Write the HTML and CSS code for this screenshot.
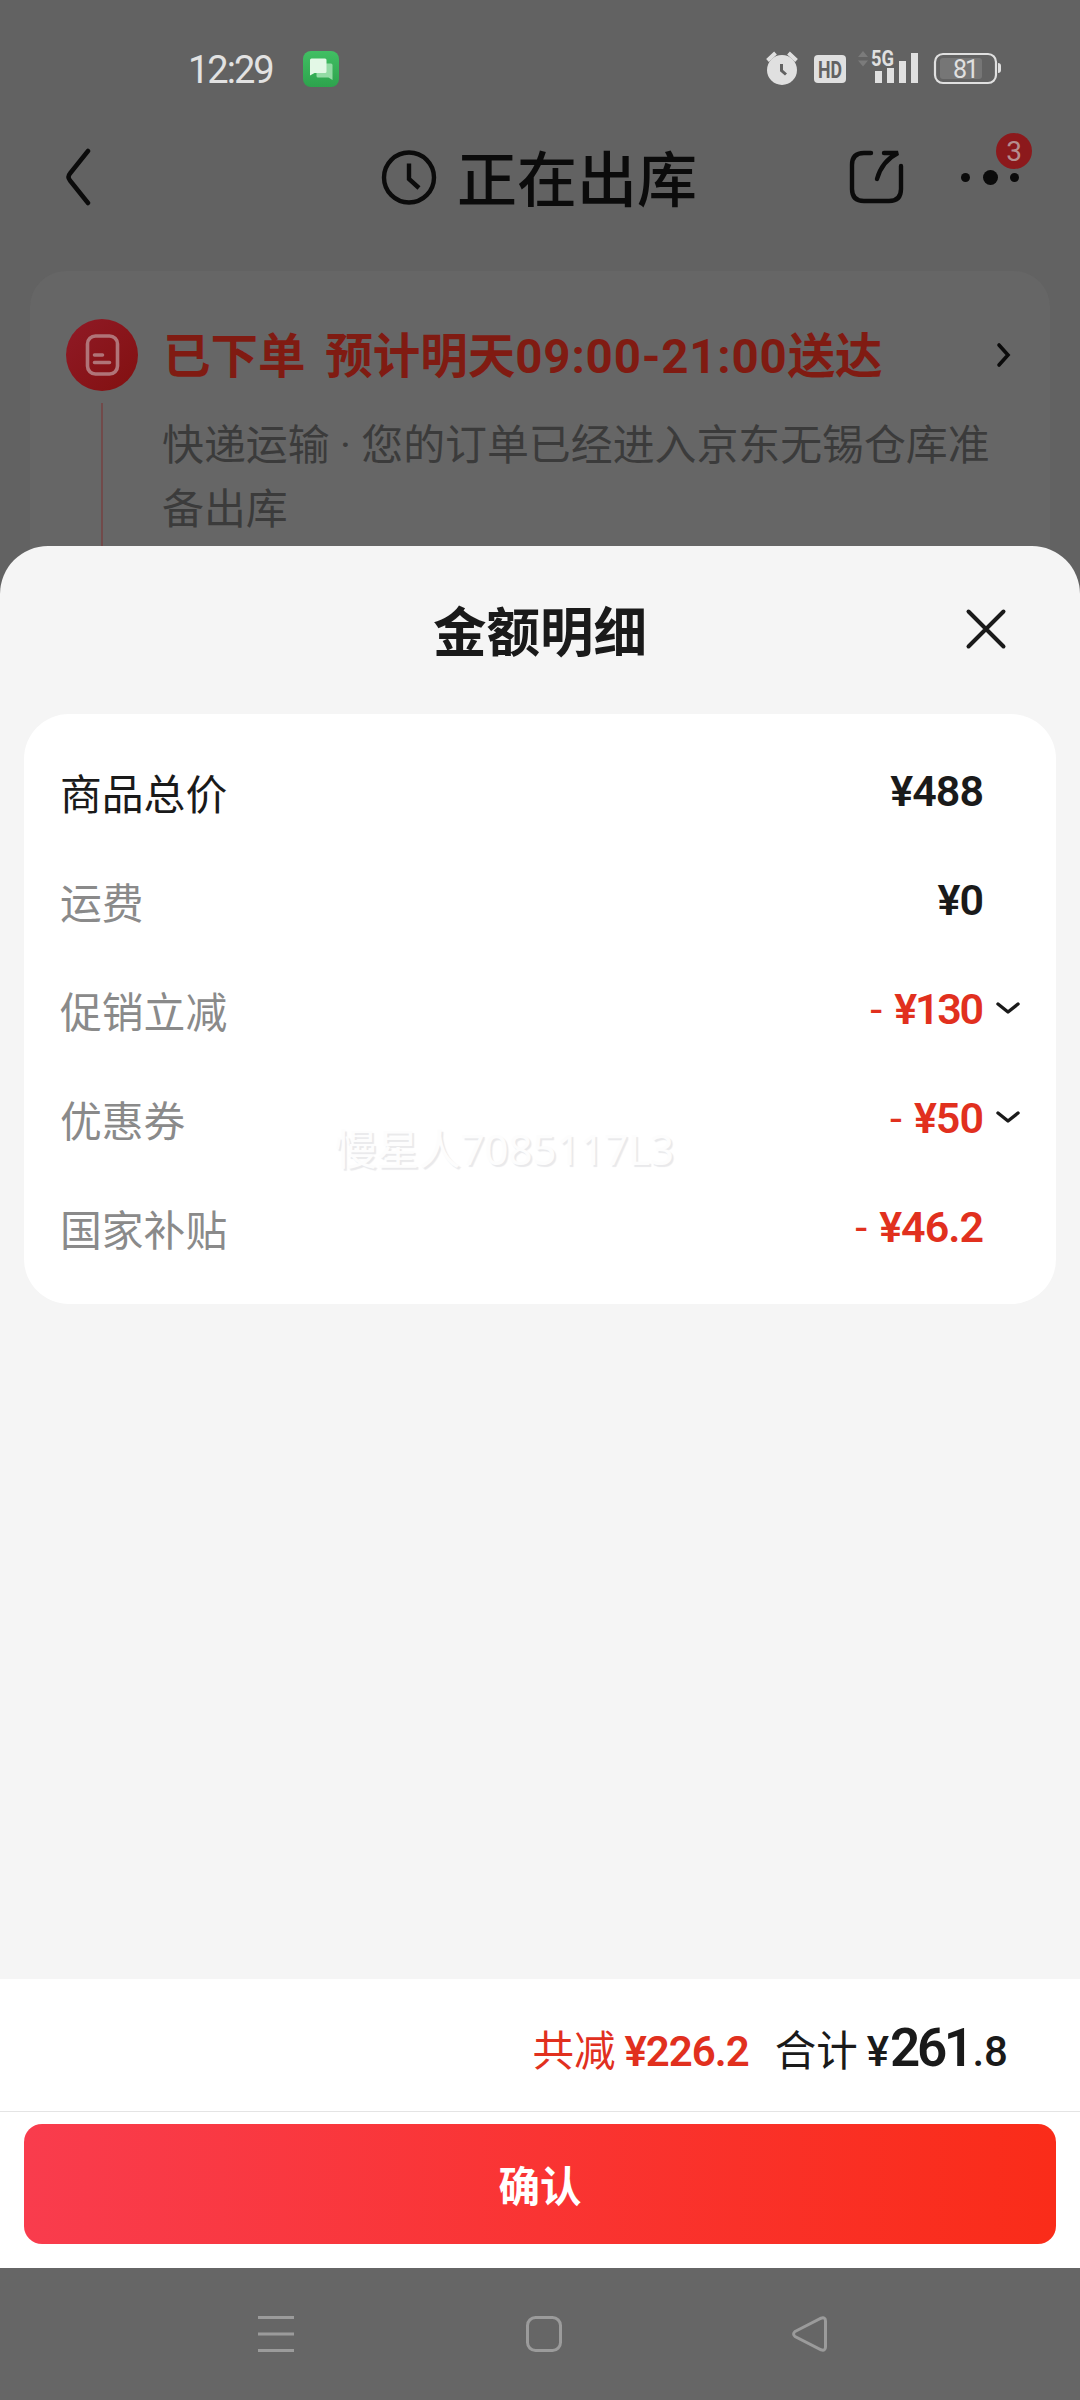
FILE: index.html
```html
<!DOCTYPE html>
<html lang="zh-CN">
<head>
<meta charset="utf-8">
<title>金额明细</title>
<link rel="stylesheet" href="styles.css">
</head>
<body>
<div class="behind">
  <div class="status">
    <span class="time">12:29</span>
    <svg class="app-icon" width="36" height="36" viewBox="0 0 36 36">
      <defs><linearGradient id="g" x1="0" y1="0" x2="0" y2="1"><stop offset="0" stop-color="#41bf63"/><stop offset="1" stop-color="#2da34d"/></linearGradient></defs>
      <rect width="36" height="36" rx="8" fill="url(#g)"/>
      <path d="M15 12.500h13q1.500 0 1.500 1.500v15l-4-2.500h-10.500q-1.500 0-1.500-1.500v-11q0-1.500 1.500-1.500z" fill="#93dba5"/>
      <path d="M8.500 7.500h13.500q1.500 0 1.500 1.500v11.500q0 1.500-1.500 1.500h-10.500l-4.500 2.500v-15.500q0-1.500 1.500-1.500z" fill="#e3f8e6"/>
    </svg>
    <svg class="indicators" width="240" height="58" viewBox="764 40 240 58">
      <circle cx="782" cy="70" r="15" fill="#e0e0e0"/>
      <path d="M767.500 60.500l8-7.500M796.500 60.500l-8-7.500" stroke="#e0e0e0" stroke-width="4"/>
      <path d="M781.500 64v6.500l4.500 4" stroke="#626262" stroke-width="3" fill="none"/>
      <rect x="814" y="55" width="32" height="28" rx="4" fill="#e0e0e0"/>
      <text x="818" y="77.500" class="hd" textLength="24" lengthAdjust="spacingAndGlyphs">HD</text>
      <path d="M858 57l5-6 5 6zM858 60.500l5 6 5-6z" fill="#7b7b7b"/>
      <text x="871" y="66" class="net" textLength="23" lengthAdjust="spacingAndGlyphs">5G</text>
      <path d="M875 71h7v12h-7zM887 68h7v15h-7zM899 61h7v22h-7zM911 53h7v30h-7z" fill="#e0e0e0"/>
      <rect x="940" y="58" width="42" height="21" rx="3" fill="#767676"/>
      <rect x="935" y="54" width="61" height="29" rx="8" fill="none" stroke="#e0e0e0" stroke-width="2.200"/>
      <path d="M998 63q3 0 3 3v4q0 3-3 3z" fill="#e0e0e0"/>
      <text x="953" y="77.500" class="pct" textLength="26">81</text>
    </svg>
  </div>
  <header class="head">
    <svg class="back" width="28" height="62" viewBox="65 145 28 62"><path d="M88 150L70 172.500Q67 176 70 179.500L88 202" fill="none" stroke="#0b0b0b" stroke-width="4.500" stroke-linecap="round"/></svg>
    <div class="head-title">
      <svg width="56" height="56" viewBox="0 0 56 56" fill="none" stroke="#0b0b0b" stroke-width="4.400"><circle cx="28" cy="28.500" r="25"/><path d="M28 14.500v15.500l10 9"/></svg>
      <h1>正在出库</h1>
    </div>
    <svg class="share" width="56" height="56" viewBox="849 149 56 56" fill="none" stroke="#0b0b0b" stroke-width="4.400" stroke-linecap="round"><path d="M871 153h-7q-12 0-12 12v24q0 12 12 12h25q12 0 12-12v-23"/><path d="M884 153h14q-16 8-21 26"/></svg>
    <div class="more"><i class="dot"></i><i class="dot big"></i><i class="dot"></i><span class="badge">3</span></div>
  </header>
  <section class="order">
    <div class="rail">
      <svg width="72" height="72" viewBox="0 0 72 72"><defs><linearGradient id="r" x1="0" y1="0" x2="1" y2="1"><stop offset="0" stop-color="#901a26"/><stop offset="1" stop-color="#821010"/></linearGradient></defs><circle cx="36" cy="36" r="36" fill="url(#r)"/><g fill="none" stroke="#b07478" stroke-width="3.600" stroke-linecap="round"><rect x="21.500" y="17" width="30" height="38" rx="8"/><path d="M28.500 36h8M28.500 43.500h15"/></g></svg>
      <i class="line"></i>
    </div>
    <div class="order-body">
      <div class="order-head"><h2>已下单 预计明天<span class="slot">09:00-21:00</span>送达</h2>
        <svg width="16" height="26" viewBox="0 0 16 26"><path d="M3 3l9 10-9 10" fill="none" stroke="#0b0b0b" stroke-width="3.600" stroke-linecap="round"/></svg></div>
      <p>快递运输 · 您的订单已经进入京东无锡仓库准备出库</p>
    </div>
  </section>
</div>
<main class="sheet">
  <div class="sheet-head">
    <h2>金额明细</h2>
    <svg class="close" width="44" height="44" viewBox="0 0 44 44"><path d="M4.500 4.500l35 35M39.500 4.500l-35 35" stroke="#1a1a1a" stroke-width="4" stroke-linecap="round"/></svg>
  </div>
  <div class="panel">
    <div class="row first"><span class="label">商品总价</span><span class="amount">¥488</span></div>
    <div class="row"><span class="label">运费</span><span class="amount">¥0</span></div>
    <div class="row cut"><span class="label">促销立减</span><span class="minus">-</span><span class="amount tight">¥130</span><svg class="chev" width="26" height="16" viewBox="0 0 26 16"><path d="M3 3l10 8 10-8"/></svg></div>
    <div class="row cut"><span class="label">优惠券</span><span class="minus">-</span><span class="amount">¥50</span><svg class="chev" width="26" height="16" viewBox="0 0 26 16"><path d="M3 3l10 8 10-8"/></svg></div>
    <div class="row cut"><span class="label">国家补贴</span><span class="minus">-</span><span class="amount">¥46.2</span></div>
    <span class="mark">慢星人7085117L3</span>
  </div>
  <div class="total">
    <span class="t-label red">共减</span><span class="t-num red">¥226.2</span>
    <span class="t-label second">合计</span><span class="t-sum">¥<b>261</b>.8</span>
  </div>
  <div class="action"><button class="confirm">确认</button></div>
</main>
<nav class="nav">
  <svg width="36" height="36" viewBox="0 0 36 36"><path d="M0 1.500h36M0 18h36M0 34.500h36"/></svg>
  <svg width="36" height="36" viewBox="0 0 36 36"><rect x="1.500" y="1.500" width="33" height="33" rx="8"/></svg>
  <svg width="36" height="36" viewBox="0 0 36 36"><path d="M3 15.500L29 2.200Q33.500 .8 33.500 5v26Q33.500 35.200 29 33.800L3 20.500Q.2 18 3 15.500z"/></svg>
</nav>
</body>
</html>
```
FILE: styles.css
```css
* { box-sizing: border-box; }
body {
  margin: 0; width: 1080px; height: 2400px; overflow: hidden;
  display: flex; flex-direction: column; background: #626262; color: #1a1a1a;
  font-family: Roboto, "Noto Sans CJK SC", sans-serif;
}
h1, h2, p { margin: 0; }
svg { display: block; flex: none; }

.behind { height: 546px; flex: none; }
.status { height: 137px; padding: 0 76px 0 188px; display: flex; align-items: center; }
.time { width: 115px; font-size: 38px; letter-spacing: -2px; color: #e2e2e2; line-height: 44px; padding-top: 2px; white-space: nowrap; }
.indicators { margin-left: auto; }
.hd { font: 700 24px Roboto, sans-serif; fill: #626262; }
.net { font: 700 22px Roboto, sans-serif; fill: #e0e0e0; }
.pct { font: 400 25px Roboto, sans-serif; fill: #e0e0e0; }

.head { height: 80px; padding: 0 61px 0 65px; display: flex; align-items: center; }
.head-title { margin-left: 288px; display: flex; align-items: center; gap: 20px; }
.head-title h1 { font-size: 60px; line-height: 72px; font-weight: 500; color: #0b0b0b; width: 240px; padding-top: 9px; white-space: nowrap; }
.share { margin-left: 152px; }
.more { position: relative; margin-left: 56px; width: 58px; display: flex; align-items: center; justify-content: space-between; }
.dot { width: 9px; height: 9px; border-radius: 50%; background: #0b0b0b; }
.dot.big { width: 15px; height: 15px; }
.badge { position: absolute; left: 35px; top: -37px; width: 36px; height: 36px; border-radius: 50%; background: #8c191c; color: #b58e8f; font-size: 28px; line-height: 37px; text-align: center; }

.order { height: 360px; margin: 54px 30px 0; border-radius: 36px; background: #666; padding: 48px 46px 0 36px; display: flex; gap: 25px; }
.rail { width: 72px; display: flex; flex-direction: column; align-items: center; gap: 12px; }
.line { width: 2px; flex: 1; background: #714a4a; }
.order-body { flex: 1; }
.order-head { height: 72px; display: flex; align-items: center; justify-content: space-between; }
.order-head h2 { font-size: 47.500px; line-height: 67px; padding-top: 5px; word-spacing: 8px; font-weight: 700; color: #801b12; white-space: nowrap; }
.slot { letter-spacing: .8px; }
.order-body p { width: 850px; margin: 23px 0 0 -1px; font-size: 41.900px; line-height: 64px; color: #3b3b3b; }

.sheet { position: relative; height: 1722px; flex: none; border-radius: 48px 48px 0 0; background: #f5f5f5; display: flex; flex-direction: column; }
.sheet-head { position: relative; height: 168px; padding-top: 8px; display: flex; justify-content: center; align-items: center; }
.sheet-head h2 { font-size: 53.500px; line-height: 64px; font-weight: 700; }
.close { position: absolute; right: 72px; top: 61px; }

.panel { position: relative; height: 590px; margin: 0 24px; padding: 22px 36px; border-radius: 45px; background: #fff; }
.row { height: 109px; display: flex; align-items: center; padding-right: 37px; }
.label { margin-right: auto; padding-top: 11px; font-size: 41.800px; line-height: 60px; color: #8a8a8a; }
.first .label { color: #1a1a1a; }
.amount { font-size: 43px; line-height: 50px; font-weight: 600; letter-spacing: -1px; }
.tight { letter-spacing: -2.200px; margin-right: 1px; }
.minus { font-size: 43px; line-height: 50px; margin-right: 12px; }
.cut .minus, .cut .amount, .red { color: #e1301e; }
.chev { margin: 0 -38px 0 12px; fill: none; stroke: #1a1a1a; stroke-width: 3.400px; stroke-linecap: round; stroke-linejoin: round; }
.mark { position: absolute; left: 311px; top: 405px; font: 42px/60px "Noto Sans", "Noto Sans CJK SC", sans-serif; letter-spacing: -.1px; color: #fdfdfd; text-shadow: 2px 2px 1px #e9e9eb; white-space: nowrap; }

.total { height: 133px; margin-top: auto; padding: 0 72px 0 0; background: #fff; border-bottom: 1px solid #e4e4e4; display: flex; justify-content: flex-end; align-items: baseline; line-height: 138px; }
.t-label { font-size: 41.500px; }
.t-num { font-size: 42px; font-weight: 600; margin-left: 9px; letter-spacing: -1px; }
.second { margin-left: 26px; }
.t-sum { font-size: 42px; font-weight: 500; margin-left: 9px; }
.t-sum b { font-size: 53px; font-weight: 600; letter-spacing: -3.500px; margin: 0 2px 0 1px; }
.action { height: 156px; padding: 12px 24px 24px; background: #fff; display: flex; }
.confirm { flex: 1; border: 0; padding: 0; border-radius: 18px; background: linear-gradient(90deg, #f93c4d, #fa2c19); color: #fff; font: 700 41.500px/118px "Noto Sans CJK SC", sans-serif; }

.nav { height: 132px; background: #666; display: flex; align-items: center; padding-left: 258px; gap: 231px; }
.nav svg { fill: none; stroke: #9b9b9b; stroke-width: 3px; }
.nav svg:nth-child(2) { margin: 0 -1px 0 1px; }
```
